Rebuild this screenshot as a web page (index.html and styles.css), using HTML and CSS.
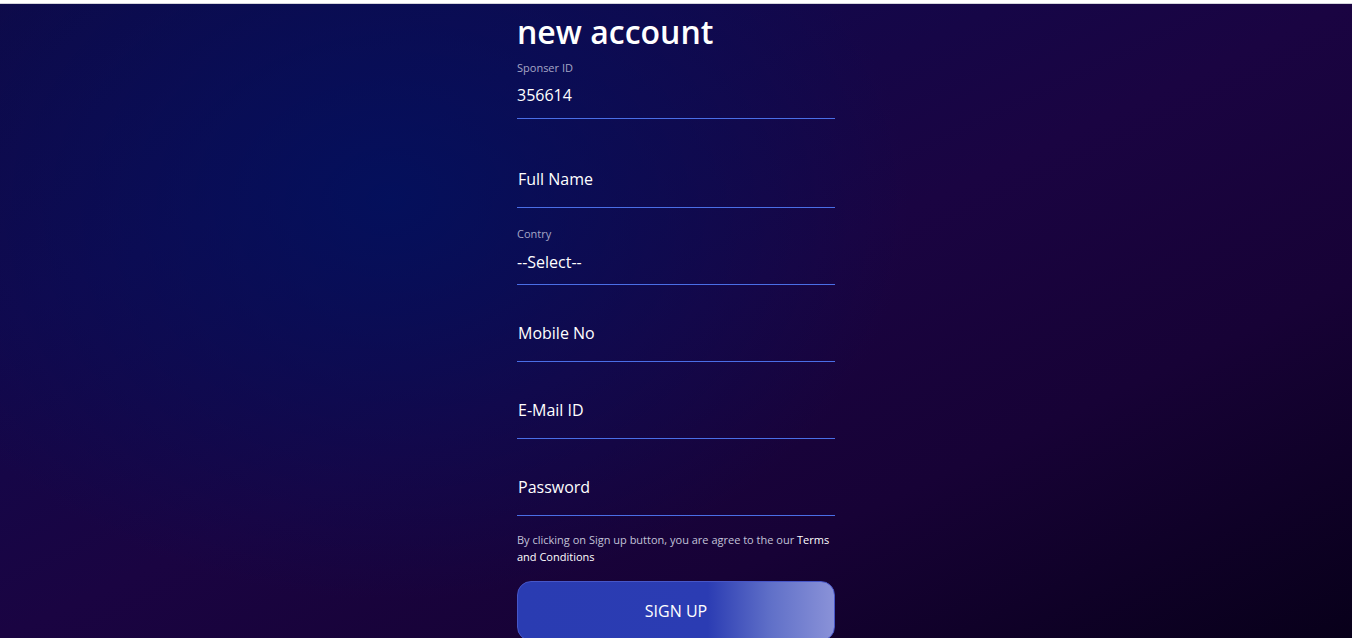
FILE: index.html
```html
<!DOCTYPE html>
<html lang="en">
<head>
    <meta charset="UTF-8">
    <meta name="viewport" content="width=device-width, initial-scale=1.0">
    <title>Create new account</title>
    <link rel="stylesheet" href="styles.css">
</head>
<body>
    <div class="topbar"></div>
    <div id="page">
        <form class="signup" onsubmit="return false;">
            <h1>new account</h1>
            <div class="field sponsor">
                <label>Sponser ID</label>
                <input type="text" value="356614">
            </div>
            <div class="field">
                <input type="text" class="tall" placeholder="Full Name">
            </div>
            <div class="field">
                <label>Contry</label>
                <select>
                    <option>--Select--</option>
                </select>
            </div>
            <div class="field">
                <input type="text" class="tall" placeholder="Mobile No">
            </div>
            <div class="field">
                <input type="text" class="tall" placeholder="E-Mail ID">
            </div>
            <div class="field last">
                <input type="password" class="tall" placeholder="Password">
            </div>
            <p class="terms">By clicking on Sign up button, you are agree to the our <a href="#">Terms and Conditions</a></p>
            <button type="submit">Sign up</button>
        </form>
    </div>
</body>
</html>
```

FILE: styles.css
```css
html, body {
    margin: 0;
    padding: 0;
    height: 100%;
}
body {
    font-family: 'Open Sans', 'Liberation Sans', sans-serif;
    color: #fff;
    overflow: hidden;
    background:
        radial-gradient(ellipse 520px 400px at 390px 200px, rgba(0, 18, 96, 0.8) 0%, rgba(0, 18, 96, 0) 100%),
        linear-gradient(to bottom right, #0e0a48 0%, #12084c 25%, #1a0442 50%, #170236 72%, #08001a 100%);
}
.topbar {
    height: 3px;
    background: #fff;
    border-bottom: 1px solid #d4d4dc;
}
#page {
    display: flex;
    justify-content: center;
}
.signup {
    width: 318px;
    padding-top: 9px;
}
h1 {
    margin: 0 0 9px;
    font-size: 32px;
    line-height: 38px;
    font-weight: 600;
    color: #fff;
}
.field {
    display: flex;
    flex-direction: column;
    margin-bottom: 18px;
}
.field.sponsor {
    margin-bottom: 30px;
}
.field.last {
    margin-bottom: 15px;
}
.field label {
    font-size: 11px;
    line-height: 16px;
    color: #a6a6c6;
}
.field input, .field select {
    font-family: inherit;
    font-size: 16px;
    line-height: 22px;
    height: 43px;
    box-sizing: border-box;
    padding: 8px 0 12px;
    margin: 0;
    border: 0;
    border-bottom: 1px solid #4a6ee6;
    border-radius: 0;
    background: transparent;
    color: #fff;
    outline: none;
    -webkit-appearance: none;
    appearance: none;
}
.field select {
    padding-top: 9px;
    padding-bottom: 11px;
}
.field input.tall {
    height: 59px;
    padding: 19px 0 17px 1px;
}
.field input::placeholder {
    color: #fff;
    opacity: 1;
}
.terms {
    margin: 0 0 16px;
    font-size: 11px;
    line-height: 17px;
    color: #c2c2d8;
}
.terms a {
    color: #fff;
    text-decoration: none;
}
button {
    display: block;
    width: 318px;
    height: 60px;
    border: 1px solid #4656c8;
    border-radius: 14px;
    background: linear-gradient(to right, #2a3cb2 0%, #2b3cb3 60%, #6070c8 80%, #8a92d8 100%);
    color: #fff;
    font-family: inherit;
    font-size: 16px;
    text-transform: uppercase;
    cursor: pointer;
}
```
